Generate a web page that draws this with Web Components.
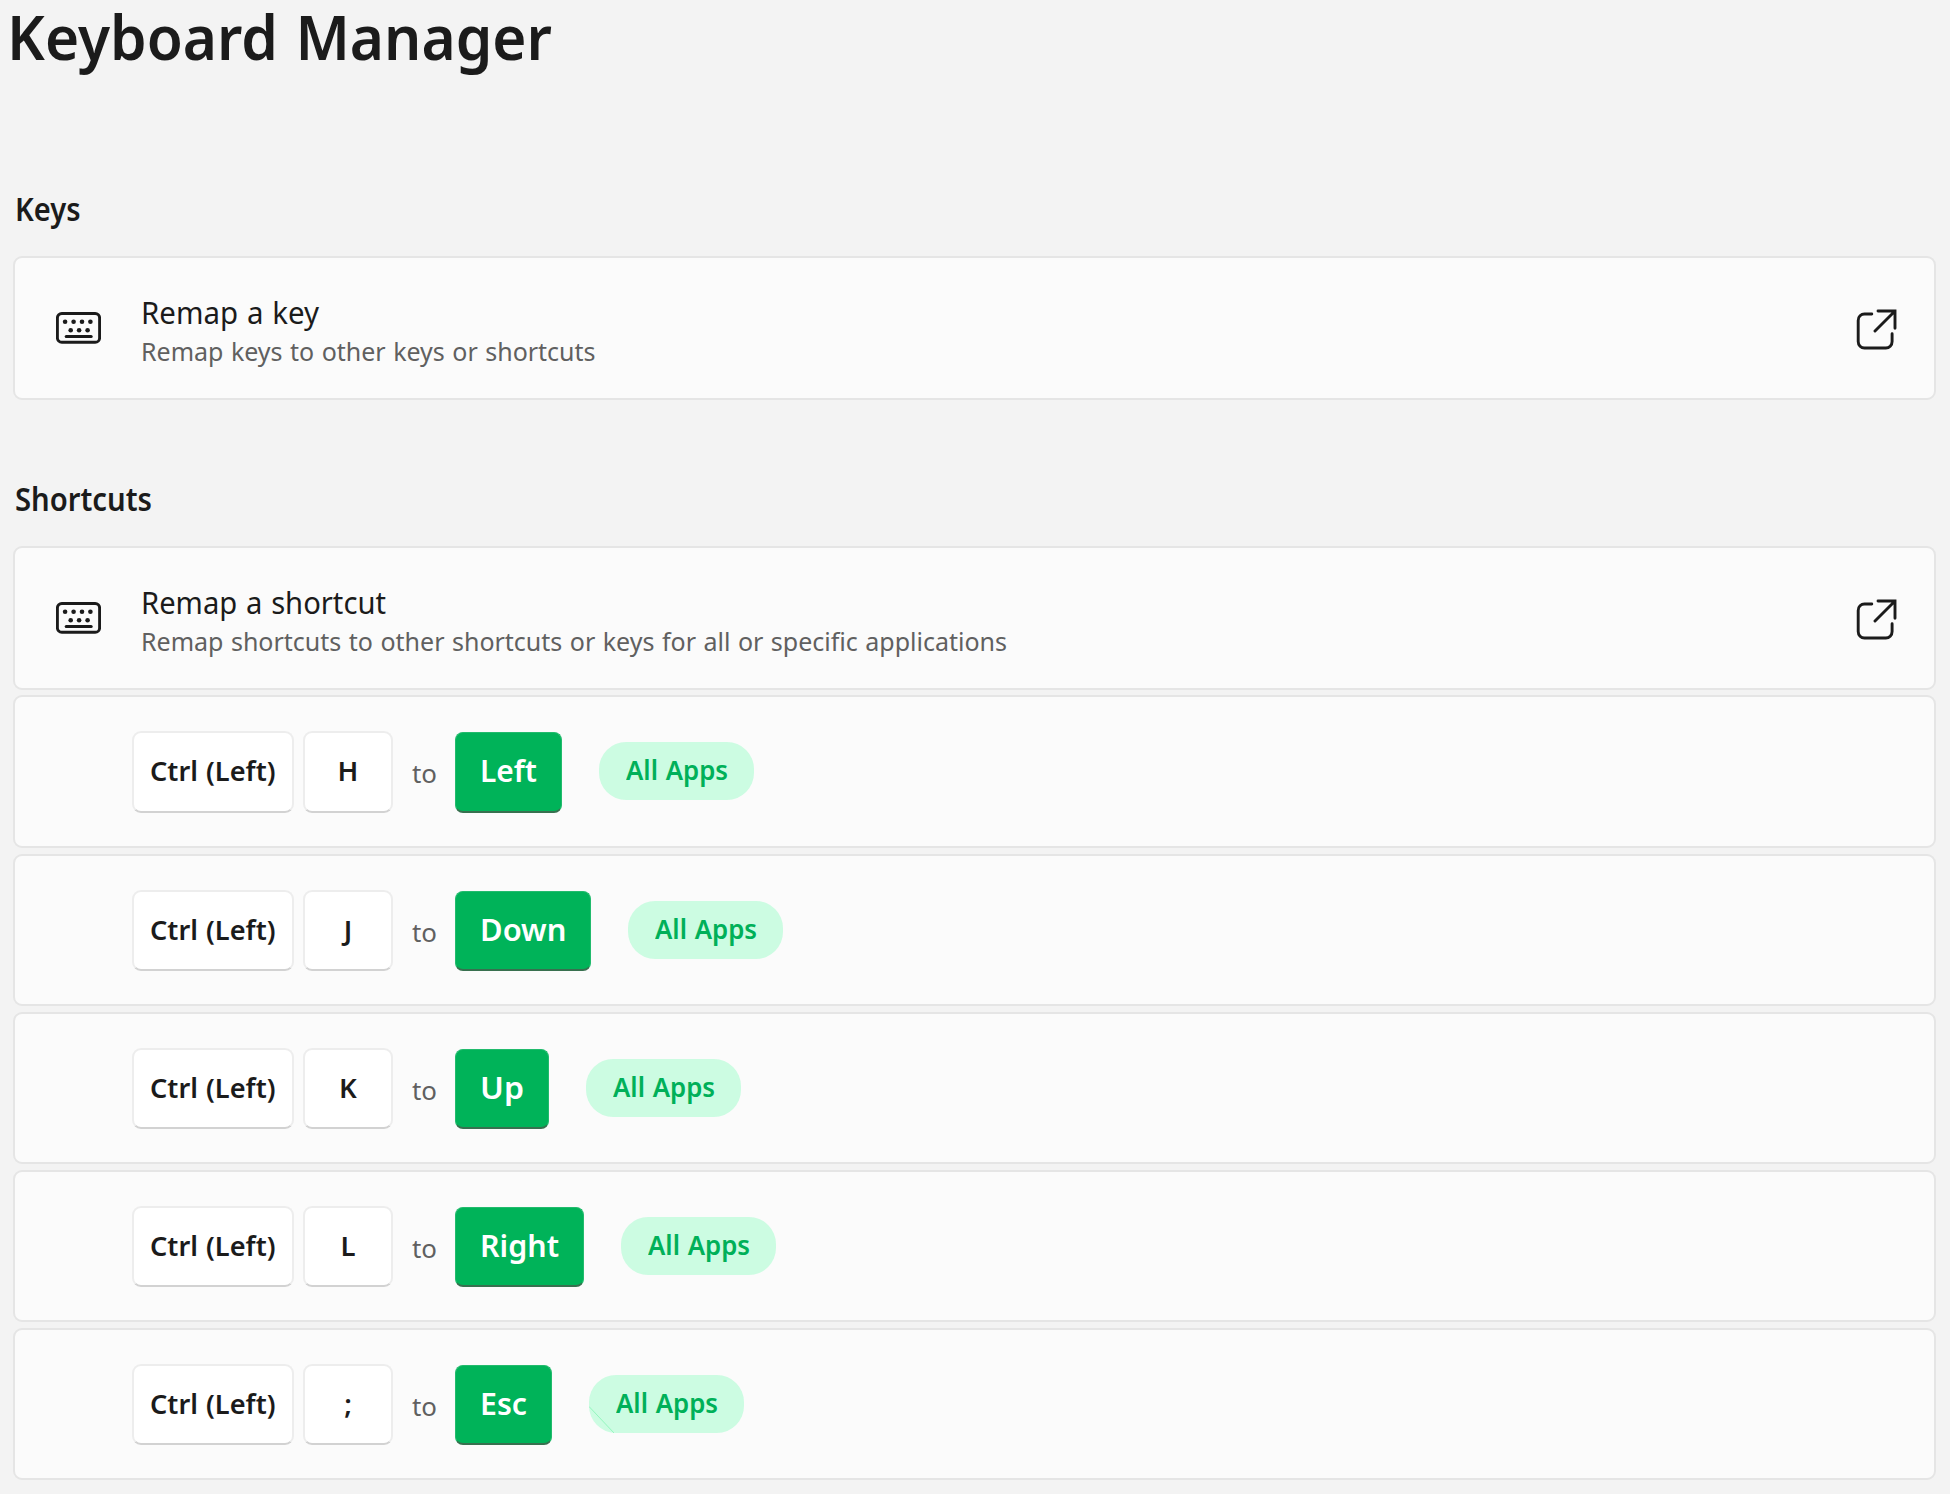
<!DOCTYPE html>
<html lang="en">
<head>
<meta charset="utf-8">
<title>Keyboard Manager</title>
<style>
html, body { margin: 0; background: #f3f3f3; }
body { width: 1950px; height: 1494px; overflow: hidden; font-family: "Noto Sans", sans-serif; color: #1b1b1b; }
</style>
</head>
<body>
<keyboard-manager></keyboard-manager>
<script>
const define = (name, html, setup) => {
  const t = document.createElement('template');
  t.innerHTML = html;
  customElements.define(name, class extends HTMLElement {
    connectedCallback() {
      if (this.shadowRoot) return;
      this.attachShadow({ mode: 'open' }).append(t.content.cloneNode(true));
      if (setup) setup(this, this.shadowRoot);
    }
  });
};

// A single line of text condensed horizontally to span the given advance width.
define('fit-text', `
<style>
:host { display: block; white-space: nowrap; }
span { display: inline-block; transform-origin: 0 50%; word-spacing: .04em; }
</style><span></span>`, (el, root) => {
  const s = root.querySelector('span');
  const w = +el.getAttribute('w');
  s.textContent = el.getAttribute('text');
  el.style.width = w + 'px';
  s.style.transform = 'scaleX(' + (w / s.getBoundingClientRect().width).toFixed(4) + ')';
});

define('keyboard-icon', `
<style>:host { display: block; width: 45px; height: 32px; } svg { display: block; }</style>
<svg width="45" height="32" viewBox="0 0 45 32" fill="#1b1b1b">
<rect x="1.4" y="1.5" width="42.2" height="28.8" rx="4.4" fill="none" stroke="#1b1b1b" stroke-width="2.9"/>
<circle cx="9.1" cy="9.7" r="2.3"/><circle cx="17.6" cy="9.7" r="2.3"/><circle cx="26" cy="9.7" r="2.3"/><circle cx="34.4" cy="9.7" r="2.3"/>
<circle cx="14.7" cy="18.2" r="2.3"/><circle cx="23.1" cy="18.2" r="2.3"/><circle cx="31.6" cy="18.2" r="2.3"/>
<rect x="8.7" y="23" width="28" height="3.1" rx="1.5"/>
</svg>`);

define('open-icon', `
<style>:host { display: block; width: 42px; height: 42px; } svg { display: block; }</style>
<svg width="42" height="42" viewBox="0 0 42 42" fill="none" stroke="#1b1b1b" stroke-width="2.9" stroke-linecap="round" stroke-linejoin="round">
<path d="M15.8 5H8.6A6.3 6.3 0 0 0 2.2 11.4V32.6A6.3 6.3 0 0 0 8.6 39H29.7A6.3 6.3 0 0 0 36.1 32.6V24.8"/>
<path stroke-linejoin="miter" d="M22 2H39V19.2M19 22L39 2"/>
</svg>`);

define('section-title', `
<style>
:host { display: block; height: 40px; margin-bottom: 27px; font-size: 31.5px; line-height: 40px; font-weight: 580; }
</style><slot></slot>`);

define('settings-card', `
<style>
:host { display: flex; box-sizing: border-box; height: 144px; border: 2px solid #e5e5e5; border-radius: 9px; background: #fbfbfb; }
.icon { margin: 54px 0 0 41px; }
.text { margin: 34px 0 0 40px; flex: 1; }
.head { font-size: 31.5px; line-height: 40px; height: 41px; }
.desc { font-size: 26.3px; line-height: 36px; color: #606060; }
open-icon { margin: 51px 36px 0 0; }
</style>
<keyboard-icon class="icon"></keyboard-icon>
<div class="text"><div class="head"><slot name="head"></slot></div><div class="desc"><slot name="desc"></slot></div></div>
<open-icon></open-icon>`);

define('key-cap', `
<style>
:host { display: flex; box-sizing: border-box; align-self: stretch; align-items: center; justify-content: center; padding-bottom: 3px;
  border: 2px solid #ededed; border-bottom-color: #d2d2d2; border-radius: 9px; background: #fff; font-size: 27.5px; font-weight: 580; }
:host([accent]) { margin-top: 1px; border: 1px solid #22bb6d; border-bottom: 2px solid #38704f; border-radius: 8px; background: #00b359; color: #fff; font-size: 31px; padding-bottom: 4px; }
</style><slot></slot>`, el => { el.style.width = el.getAttribute('width') + 'px'; });

define('app-badge', `
<style>
:host { display: flex; position: relative; box-sizing: border-box; width: 155px; height: 58px; margin: 0 0 2px 37px; padding-bottom: 2px; align-items: center; justify-content: center;
  border-radius: 27px; background: #ccfce2; color: #00b059; font-size: 26.5px; font-weight: 580; }
svg { display: none; position: absolute; left: 0; top: 0; }
:host([seam]) svg { display: block; }
</style><fit-text text="All Apps" w="102"></fit-text>
<svg width="30" height="58"><path d="M0 31.5L25 58" stroke="#85f5b5" stroke-width=".8"/></svg>`);

define('shortcut-row', `
<style>
:host { display: flex; box-sizing: border-box; height: 152px; margin-top: 6px; border: 2px solid #e5e5e5; border-radius: 9px; background: #fbfbfb; }
.line { display: flex; align-items: center; height: 81px; margin: 34px 0 0 117px; }
:host([first]) { height: 153px; margin-top: 5px; }
:host([first]) .line { height: 82px; }
.second { margin-left: 9px; }
.to { width: 62px; padding-top: 2px; display: flex; justify-content: center; font-size: 26.3px; color: #606060; }
</style>
<div class="line">
<key-cap width="162"><fit-text text="Ctrl (Left)" w="125.5"></fit-text></key-cap>
<key-cap class="second" width="90"><span class="k"></span></key-cap>
<div class="to"><fit-text text="to" w="25"></fit-text></div>
<key-cap accent></key-cap>
<app-badge></app-badge>
</div>`, (el, root) => {
  root.querySelector('.k').textContent = el.getAttribute('key');
  const cap = root.querySelector('[accent]');
  cap.style.width = el.getAttribute('cap') + 'px';
  const f = document.createElement('fit-text');
  f.setAttribute('text', el.getAttribute('target'));
  f.setAttribute('w', el.getAttribute('span'));
  cap.append(f);
  if (el.hasAttribute('seam')) root.querySelector('app-badge').setAttribute('seam', '');
});

define('keyboard-manager', `
<style>
:host { display: block; }
h1 { margin: 0 0 117px 7px; height: 72px; font-size: 62px; line-height: 72px; font-weight: 580; }
main { width: 1923px; margin-left: 13px; }
section + section { margin-top: 79px; }
section-title { margin-left: 2px; }
</style>
<h1><fit-text text="Keyboard Manager" w="545"></fit-text></h1>
<main>
<section>
<section-title><fit-text text="Keys" w="65.5"></fit-text></section-title>
<settings-card><fit-text slot="head" text="Remap a key" w="178"></fit-text><fit-text slot="desc" text="Remap keys to other keys or shortcuts" w="454.5"></fit-text></settings-card>
</section>
<section>
<section-title><fit-text text="Shortcuts" w="137"></fit-text></section-title>
<settings-card><fit-text slot="head" text="Remap a shortcut" w="245"></fit-text><fit-text slot="desc" text="Remap shortcuts to other shortcuts or keys for all or specific applications" w="866"></fit-text></settings-card>
<shortcut-row first key="H" target="Left" cap="107" span="57"></shortcut-row>
<shortcut-row key="J" target="Down" cap="136" span="86.5"></shortcut-row>
<shortcut-row key="K" target="Up" cap="94" span="44"></shortcut-row>
<shortcut-row key="L" target="Right" cap="129" span="79"></shortcut-row>
<shortcut-row key=";" target="Esc" cap="97" span="47" seam></shortcut-row>
</section>
</main>`);
</script>
</body>
</html>
